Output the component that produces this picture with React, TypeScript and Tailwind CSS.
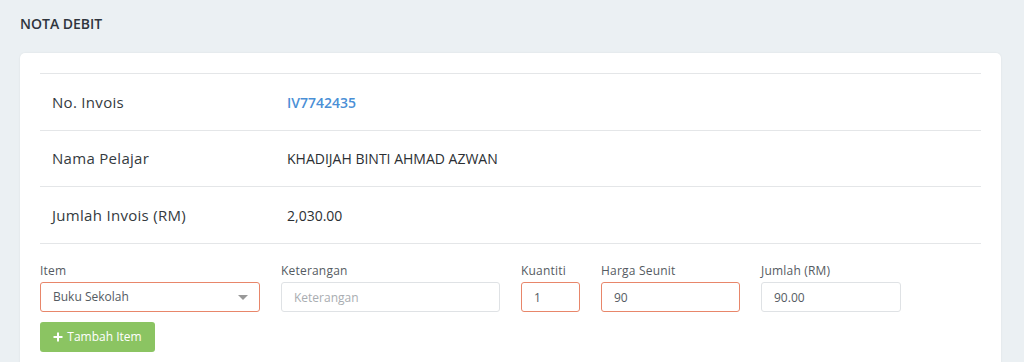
import React from 'react';

const rows = [
    { label: 'No. Invois', value: 'IV7742435', link: true, h: 'h-[57px]' },
    { label: 'Nama Pelajar', value: 'KHADIJAH BINTI AHMAD AZWAN', link: false, h: 'h-[56px]' },
    { label: 'Jumlah Invois (RM)', value: '2,030.00', link: false, h: 'h-[57px]' },
];

const App: React.FC = () => {
    return (
        <div
            className="min-h-screen bg-[#ebf0f3] pl-5 pr-[23px] pt-[15px]"
            style={{ fontFamily: '"Open Sans", "Liberation Sans", sans-serif' }}
        >
            <h1 className="text-[14px] font-semibold text-[#2f353d] leading-[18px]">
                NOTA DEBIT
            </h1>
            <div className="mt-5 bg-white rounded-[5px] shadow-[0_0_2px_rgba(0,0,0,0.08)] px-5 pt-5 pb-10">
                {rows.map((row) => (
                    <div
                        key={row.label}
                        className={`flex items-center ${row.h} border-t border-[#e4e6e8] pl-3`}
                    >
                        <div className="w-[235px] text-[15px] tracking-[0.3px] text-[#343a40]">
                            {row.label}
                        </div>
                        <div
                            className={`text-[14px] ${
                                row.link ? 'text-[#4a8fd6] font-semibold' : 'text-[#2b2f33] font-medium'
                            }`}
                        >
                            {row.value}
                        </div>
                    </div>
                ))}
                <div className="border-t border-[#e4e6e8] pt-[19px]">
                    <div className="flex gap-[21px] text-[12px]">
                        <div className="w-[220px]">
                            <label className="block text-[#555b62] leading-4 mb-[3px] tracking-[0.2px]">Item</label>
                            <div className="relative h-[30px] border border-[#e8866a] rounded-[3px] flex items-center px-3 text-[#555b62]">
                                Buku Sekolah
                                <span className="absolute right-[11px] top-[12px] w-0 h-0 border-l-[5px] border-r-[5px] border-t-[5px] border-l-transparent border-r-transparent border-t-[#999]" />
                            </div>
                        </div>
                        <div className="w-[219px]">
                            <label className="block text-[#555b62] leading-4 mb-[3px] tracking-[0.2px]">Keterangan</label>
                            <input
                                placeholder="Keterangan"
                                className="w-full h-[30px] border border-[#dfe2e5] rounded-[3px] px-3 outline-none placeholder:text-[#a9adb1]"
                            />
                        </div>
                        <div className="w-[59px]">
                            <label className="block text-[#555b62] leading-4 mb-[3px] tracking-[0.2px]">Kuantiti</label>
                            <input
                                defaultValue="1"
                                className="w-full h-[30px] border border-[#e8866a] rounded-[3px] px-3 outline-none text-[#555b62]"
                            />
                        </div>
                        <div className="w-[139px]">
                            <label className="block text-[#555b62] leading-4 mb-[3px] tracking-[0.2px]">Harga Seunit</label>
                            <input
                                defaultValue="90"
                                className="w-full h-[30px] border border-[#e8866a] rounded-[3px] px-3 outline-none text-[#555b62]"
                            />
                        </div>
                        <div className="w-[140px]">
                            <label className="block text-[#555b62] leading-4 mb-[3px] tracking-[0.2px]">Jumlah (RM)</label>
                            <input
                                defaultValue="90.00"
                                readOnly
                                className="w-full h-[30px] border border-[#dfe2e5] rounded-[3px] px-3 outline-none text-[#555b62]"
                            />
                        </div>
                    </div>
                    <button className="mt-[10px] h-[30px] w-[115px] bg-[#8bc462] rounded-[3px] text-white text-[12px] flex items-center justify-center gap-1">
                        <svg width="10" height="10" viewBox="0 0 10 10">
                            <path d="M5 0.5v9M0.5 5h9" stroke="white" strokeWidth="2" />
                        </svg>
                        Tambah Item
                    </button>
                </div>
            </div>
        </div>
    );
};

export default App;
